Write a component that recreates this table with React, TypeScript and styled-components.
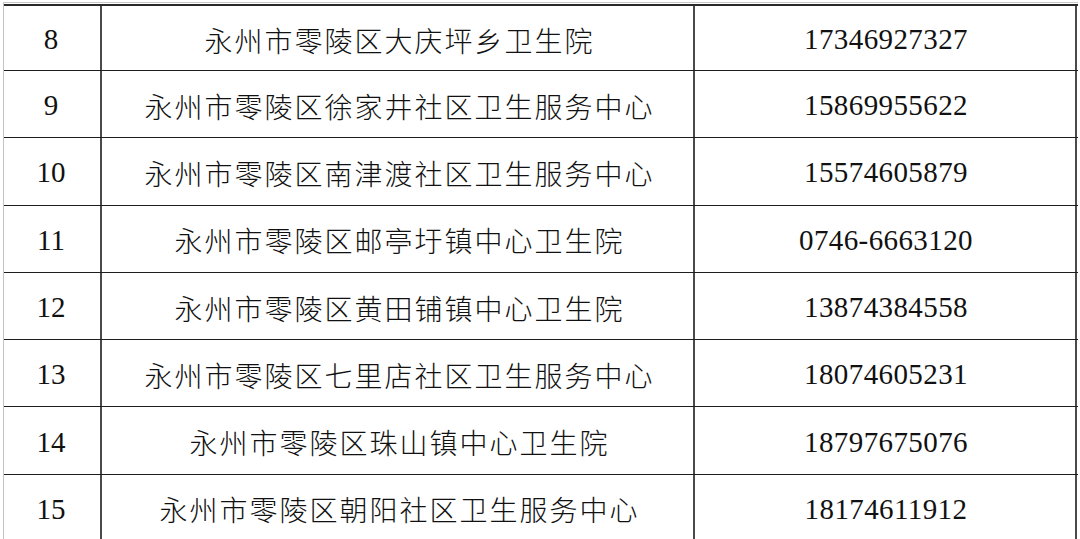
import React from "react";
import styled, { createGlobalStyle } from "styled-components";

const rows = [
  { no: "8", name: "永州市零陵区大庆坪乡卫生院", phone: "17346927327" },
  { no: "9", name: "永州市零陵区徐家井社区卫生服务中心", phone: "15869955622" },
  { no: "10", name: "永州市零陵区南津渡社区卫生服务中心", phone: "15574605879" },
  { no: "11", name: "永州市零陵区邮亭圩镇中心卫生院", phone: "0746-6663120" },
  { no: "12", name: "永州市零陵区黄田铺镇中心卫生院", phone: "13874384558" },
  { no: "13", name: "永州市零陵区七里店社区卫生服务中心", phone: "18074605231" },
  { no: "14", name: "永州市零陵区珠山镇中心卫生院", phone: "18797675076" },
  { no: "15", name: "永州市零陵区朝阳社区卫生服务中心", phone: "18174611912" },
];

const App = () => {
  return (
    <>
      <GlobalStyle />
      <Page>
        <Table>
          {rows.map((row, i) => (
            <Row key={row.no} $first={i === 0}>
              <NumCell>{row.no}</NumCell>
              <NameCell>{row.name}</NameCell>
              <PhoneCell>{row.phone}</PhoneCell>
            </Row>
          ))}
        </Table>
      </Page>
    </>
  );
};

// Styled components

const GlobalStyle = createGlobalStyle`
  html, body {
    margin: 0;
    padding: 0;
    background: #fff;
    overflow: hidden;
  }
`;

const Page = styled.div`
  width: 1080px;
  height: 539px;
  overflow: hidden;
  padding: 2px 0 0 3px;
  box-sizing: border-box;
`;

const Table = styled.div`
  width: 1074px;
  border-top: 1px solid #c9c9c9;
  border-left: 1px solid #c4c4c4;
  padding-top: 1px;
`;

const Row = styled.div<{ $first?: boolean }>`
  display: grid;
  grid-template-columns: 98px 593px 382px;
  height: ${(p) => (p.$first ? "64px" : "66.3px")};
  border-bottom: 1px solid #1e1e1e;
  border-top: ${(p) => (p.$first ? "2px solid #2a2a2a" : "none")};
  box-sizing: content-box;
`;

const Cell = styled.div`
  display: flex;
  align-items: center;
  justify-content: center;
  padding-top: 3px;
  box-sizing: border-box;
  border-right: 2px solid #4a4a4a;
  color: #111;
  white-space: nowrap;
`;

const NumCell = styled(Cell)`
  font-family: "Liberation Serif", "Times New Roman", serif;
  font-size: 29px;
  padding-right: 2px;
`;

const NameCell = styled(Cell)`
  font-family: "Noto Sans CJK SC", "Noto Sans", sans-serif;
  font-weight: 300;
  font-size: 28px;
  letter-spacing: 2px;
  padding-left: 4px;
`;

const PhoneCell = styled(Cell)`
  font-family: "Liberation Serif", "Times New Roman", serif;
  font-size: 29px;
  letter-spacing: 0.4px;
  padding-left: 2px;
`;

export default App;
